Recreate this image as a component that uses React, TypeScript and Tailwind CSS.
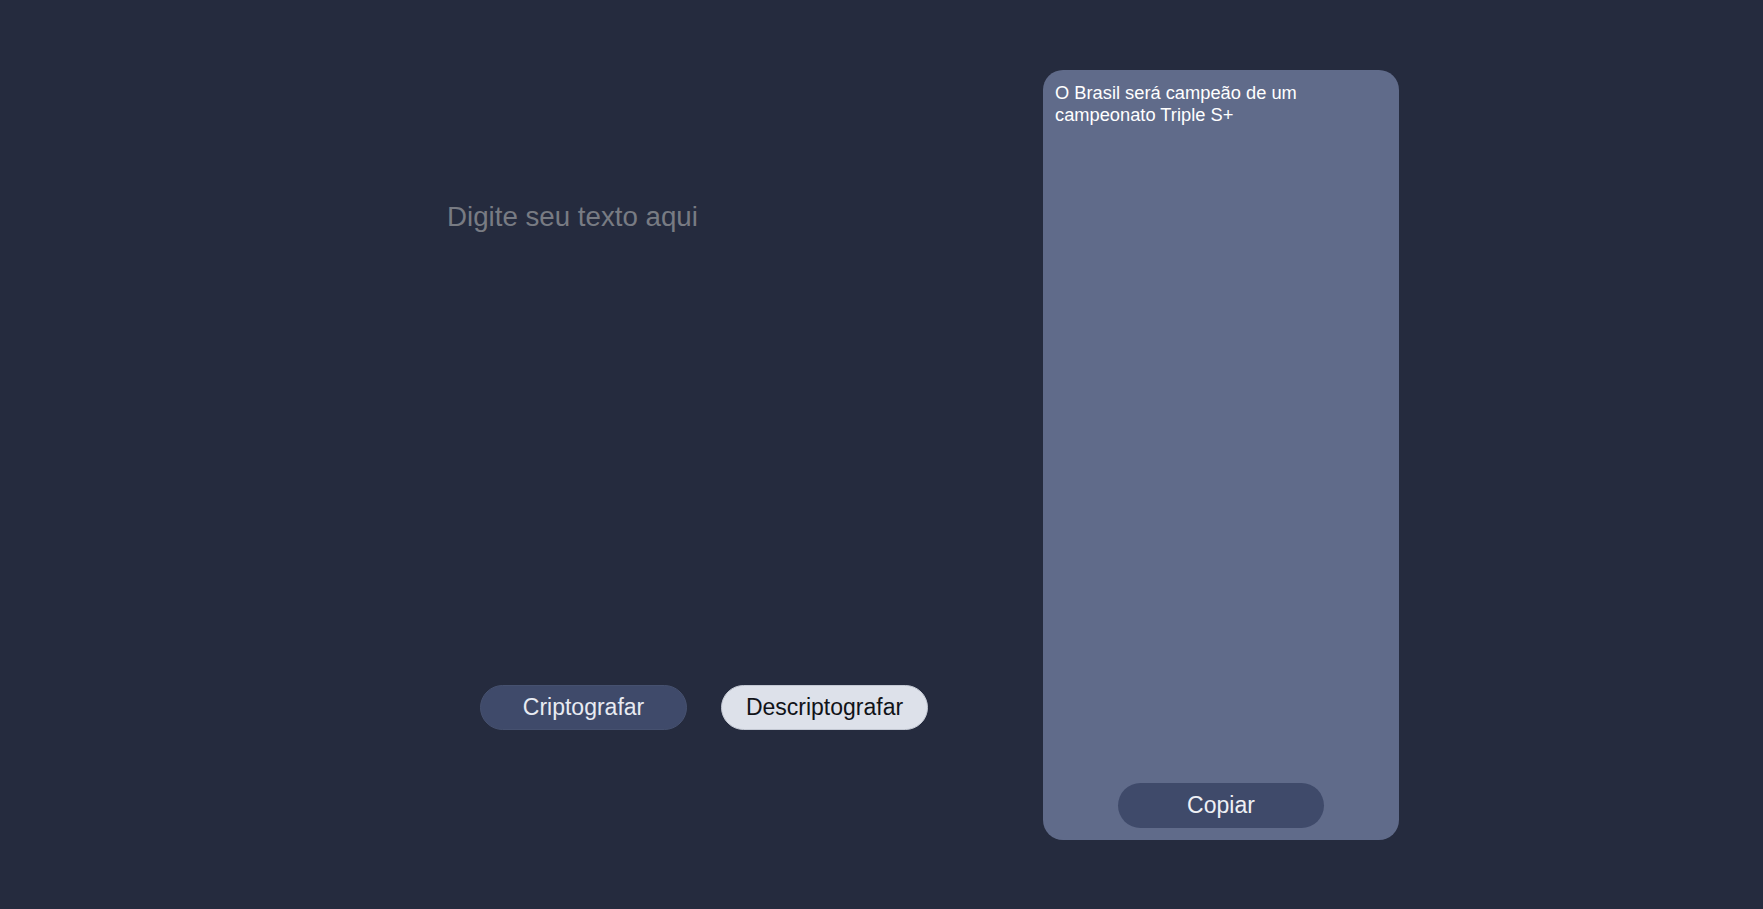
import React from "react";

export default function App() {
  return (
    <div
      className="w-full h-[909px] overflow-hidden bg-[#252b3e] flex pt-[70px] pl-[447px]"
      style={{ fontFamily: '"Liberation Sans", Arial, sans-serif' }}
    >
      <div className="w-[520px] h-[770px] flex flex-col">
        <textarea
          placeholder="Digite seu texto aqui"
          className="block mt-[131px] h-[441px] w-full bg-transparent resize-none outline-none border-0 p-0 text-[27.7px] leading-[32px] text-[#d0d4de] placeholder:text-[#787b83]"
          style={{ fontFamily: '"Liberation Sans", Arial, sans-serif' }}
        />
        <div className="mt-[43px] pl-[33px] flex gap-[34px]">
          <button className="w-[207px] h-[45px] rounded-full bg-[#3f4a6a] border border-[#46516f] text-[23px] text-[#e8ebf2]">
            Criptografar
          </button>
          <button className="w-[207px] h-[45px] rounded-full bg-[#dde1ea] border border-[#c3c8d3] text-[23px] text-[#111318]">
            Descriptografar
          </button>
        </div>
      </div>
      <div className="ml-[76px] w-[356px] h-[770px] rounded-[20px] bg-[#606b8a] p-3 flex flex-col">
        <p className="text-[18.3px] leading-[22px] text-white">
          O Brasil será campeão de um campeonato Triple S+
        </p>
        <button className="mt-auto mx-auto w-[206px] h-[45px] rounded-full bg-[#3f4a6a] text-[23px] text-[#eef0f5]">
          Copiar
        </button>
      </div>
    </div>
  );
}
